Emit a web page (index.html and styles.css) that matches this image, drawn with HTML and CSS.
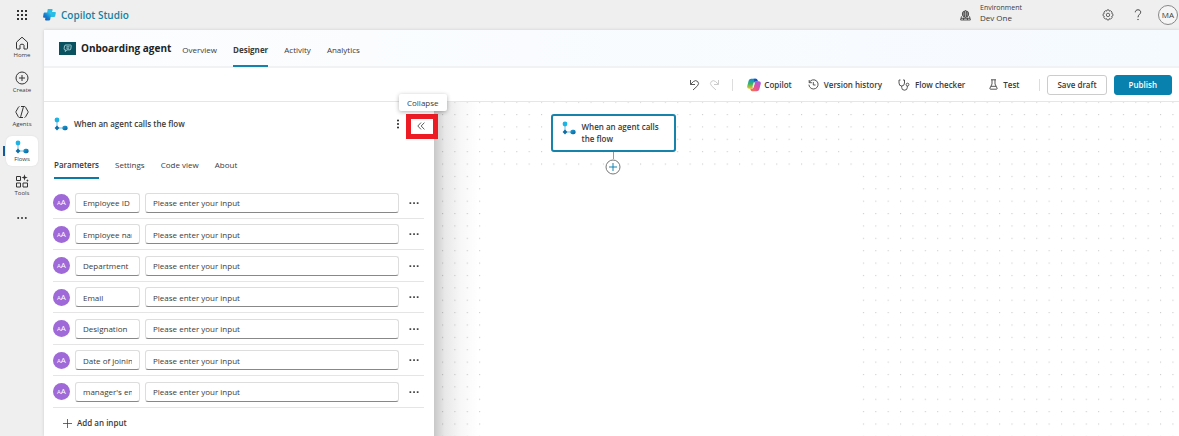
FILE: index.html
```html
<!DOCTYPE html>
<html lang="en">
<head>
<meta charset="utf-8">
<title>Onboarding agent - Copilot Studio</title>
<link rel="stylesheet" href="styles.css">
</head>
<body>
<svg class="defs" aria-hidden="true">
  <defs>
    <linearGradient id="node-blue" x1="0" y1="0" x2="1" y2="1"><stop offset="0" stop-color="#1fa4d4"/><stop offset="1" stop-color="#0a5c9c"/></linearGradient>
    <linearGradient id="logo-blue" x1="0" y1="1" x2="1" y2="0"><stop offset="0" stop-color="#1746a8"/><stop offset=".5" stop-color="#1581cf"/><stop offset="1" stop-color="#39d3ee"/></linearGradient>
    <linearGradient id="cp-left" x1="0" y1="0" x2="0" y2="1"><stop offset="0" stop-color="#1687e0"/><stop offset=".5" stop-color="#31b76a"/><stop offset="1" stop-color="#f2c21b"/></linearGradient>
    <linearGradient id="cp-right" x1="1" y1="0" x2="0" y2="1"><stop offset="0" stop-color="#9a5cf0"/><stop offset=".5" stop-color="#e0529c"/><stop offset="1" stop-color="#fb7a3c"/></linearGradient>
    <symbol id="flow" viewBox="0 0 14 14"><path d="M3 3v8h8" fill="none" stroke="#3a9cc8" stroke-width=".7"/><circle cx="3" cy="3" r="2.400" fill="#1db4e4"/><path d="M3 8.600 5.400 11 3 13.400.6 11z" fill="#0f6ea6"/><rect x="8.400" y="8.800" width="5.200" height="4.400" rx="2" fill="url(#node-blue)"/></symbol>
    <symbol id="more" viewBox="0 0 10 4"><path d="M.5 1.300h1.700V3H.5zM4.200 1.300h1.700V3H4.200zM7.800 1.300h1.700V3H7.800z" fill="#444"/></symbol>
    <pattern id="dots" width="12.380" height="12.380" patternUnits="userSpaceOnUse" patternTransform="translate(1.800 -.4)"><rect x="0" y="0" width="1.100" height="1.100" fill="#ccc"/></pattern>
  </defs>
</svg>

<header class="topbar">
  <button class="icon-btn waffle" aria-label="App launcher"><svg width="12" height="12" viewBox="0 0 12 12" fill="#333"><path d="M1 1h2v2H1zM5 1h2v2H5zM9 1h2v2H9zM1 5h2v2H1zM5 5h2v2H5zM9 5h2v2H9zM1 9h2v2H1zM5 9h2v2H5zM9 9h2v2H9z"/></svg></button>
  <a class="brand" href="#">
    <svg width="13" height="12" viewBox="0 0 13 12"><path d="M4.800 0h4q1 0 .8 1L9 3h3q1 0 .8 1l-.6 3q-.2 1-1.200 1H5L4 4z" fill="#28bde4"/><path d="M1.600 3.500h6q1 0 .8 1L7.200 10.500Q7 11.600 6 11.600H3q-1 0-.9-1l.3-1.900H1q-1 0-.9-1l.5-3.200q.2-1 1-1z" fill="url(#logo-blue)"/></svg>
    <span>Copilot Studio</span>
  </a>
  <div class="environment">
    <svg width="11" height="11" viewBox="0 0 11 11" fill="none" stroke="#333" stroke-width=".8"><circle cx="5.500" cy="4" r="3.200"/><ellipse cx="5.500" cy="4" rx="1.400" ry="3.200"/><path d="M2.300 3h6.400M2.300 5h6.400M1.500 6.300.6 10h9.800l-.9-3.700M1 8.300h9M3.800 7.500 3.500 10M7.200 7.500l.3 2.500"/></svg>
    <div class="env-text"><span class="env-label">Environment</span><span>Dev One</span></div>
  </div>
  <button class="icon-btn settings" aria-label="Settings"><svg width="12" height="12" viewBox="0 0 12 12" fill="none" stroke="#444" stroke-width=".8"><path d="m5 .9 2 0 .4 1.300 1.300-.5 1.400 1.400-.5 1.200 1.300.6v2l-1.300.6.5 1.200-1.400 1.400-1.300-.5-.4 1.300H5l-.5-1.300-1.200.5L1.900 8.700l.5-1.200-1.300-.6v-2l1.300-.6-.5-1.200 1.400-1.400 1.200.5z" stroke-linejoin="round"/><circle cx="6" cy="5.900" r="1.700"/></svg></button>
  <button class="icon-btn help" aria-label="Help"><svg width="8" height="12" viewBox="0 0 8 12" fill="none" stroke="#444" stroke-width="1"><path d="M1.300 3.300C1.300 1.700 2.400.8 4 .8s2.700.9 2.700 2.400C6.700 5.300 4 5.600 4 8.300"/><circle cx="4" cy="10.500" r=".3"/></svg></button>
  <button class="avatar" aria-label="Account">MA</button>
</header>

<div class="shell">
  <nav class="rail" aria-label="Main">
    <a href="#"><svg width="14" height="14" viewBox="0 0 14 14" fill="none" stroke="#333"><path d="M1.500 6.200 7 1.200l5.500 5v6q0 .8-.8.8H9V9.300Q9 8.200 7 8.200t-2 1.100V13H2.300q-.8 0-.8-.8z" stroke-linejoin="round"/></svg>Home</a>
    <a href="#"><svg width="14" height="14" viewBox="0 0 14 14" fill="none" stroke="#333"><circle cx="7" cy="7" r="6"/><path d="M7 4v6M4 7h6"/></svg>Create</a>
    <a href="#"><svg width="14" height="14" viewBox="0 0 14 14" fill="none" stroke="#333" stroke-linejoin="round"><path d="M9 1.500H4.600q-.8 0-1.200.8L1 6.500q-.3.500 0 1l2.300 4.200q.4.800 1.200.8.900 0 1.200-.9L8.300 2.400Q8.600 1.500 9.400 1.500q.8 0 1.200.8L13 6.500q.3.500 0 1l-2.400 4.200q-.4.800-1.200.8H5"/><path d="M4.600 1.500H6M8 12.500h1.400" stroke="#efefef" stroke-width="1.200"/></svg>Agents</a>
    <a href="#" class="current" aria-current="page"><svg width="14" height="14"><use href="#flow"/></svg>Flows</a>
    <a href="#"><svg width="14" height="14" viewBox="0 0 14 14" fill="none" stroke="#333"><path d="M1.500 2.500h4v4h-4zM1.500 9h4v4h-4zM8 9h4.500v4H8z"/><path d="M9.500.3 10.300 2.700l2.400.8-2.400.8-.8 2.400-.8-2.400-2.300-.8 2.300-.8zM12.400 5l.4 1.200 1.200.4-1.200.4-.4 1.200L12 7l-1.200-.4 1.200-.4z" fill="#333" stroke="none"/></svg>Tools</a>
    <button class="icon-btn rail-more" aria-label="More"><svg width="10" height="4" viewBox="0 0 10 4" fill="#333"><circle cx="1.200" cy="2" r="1"/><circle cx="5" cy="2" r="1"/><circle cx="8.800" cy="2" r="1"/></svg></button>
  </nav>

  <main class="main">
    <div class="agent-bar">
      <svg width="17" height="13" viewBox="0 0 17 13"><path d="M0 0h17v13H0z" fill="#09515f"/><path d="M7 3h4.500q.8 0 .7.800L11.800 7q-.1.800-1 .8H8L6.200 9.500 6.400 7.800q-1.500 0-1.300-1L5.500 4Q5.600 3 7 3zM7.500 4.800h3M7.300 6.200h2.800" fill="none" stroke="#b9e6e9" stroke-width=".8"/></svg>
      <h1>Onboarding agent</h1>
      <nav class="tabs" aria-label="Agent">
        <a href="#">Overview</a><a href="#" class="selected" aria-current="page">Designer</a><a href="#">Activity</a><a href="#">Analytics</a>
      </nav>
    </div>

    <div class="toolbar">
      <button class="icon-btn undo" aria-label="Undo"><svg width="11" height="12" viewBox="0 0 11 12" fill="none" stroke="#444" stroke-width=".9"><path d="M1.500 1v4.500H6M1.600 5.300 4.500 2.500q2.300-1.800 4.200 0 1.900 2-.2 4.300L4 11"/></svg></button>
      <button class="icon-btn redo" aria-label="Redo" disabled><svg width="11" height="12" viewBox="0 0 11 12" fill="none" stroke="#ccc"><path d="M9.500 1v4.500H5M9.400 5.300 6.500 2.500q-2.300-1.800-4.200 0-1.900 2 .2 4.300L7 11"/></svg></button>
      <span class="divider"></span>
      <button class="tool copilot"><svg width="14" height="14" viewBox="0 0 14 14"><path d="M4.200.7h4.600q1.200 0 1.600 1.300l.4 1.300H9q-1 0-1.300 1L6 9.500q-.4 1.200-1.500 1.200H2.200Q-.3 10.700.3 8L1.600 2.800Q2.200.7 4.200.7z" fill="url(#cp-left)"/><path d="M9.800 13.300H5.200q-1.200 0-1.600-1.300l-.4-1.300H5q1 0 1.300-1L8 4.500q.4-1.200 1.500-1.200h2.300q2.500 0 1.900 2.700l-1.300 5.200q-.6 2.100-2.600 2.100z" fill="url(#cp-right)"/><path d="M6.600.7h2.200q1.200 0 1.600 1.300l.4 1.300H9q-.9 0-1.200 1z" fill="#1c4fc0"/><path d="M6.400 4.500h1.300L6.800 9.500H5.300z" fill="#fff" opacity=".75"/></svg>Copilot</button>
      <button class="tool history"><svg width="11" height="11" viewBox="0 0 11 11" fill="none" stroke="#444" stroke-width=".9"><path d="M1.300 3.500A4.600 4.600 0 1 1 .9 5.700M1.200 1v2.700h2.700M5.300 3v3h2.200"/></svg>Version history</button>
      <button class="tool checker"><svg width="12" height="12" viewBox="0 0 12 12" fill="none" stroke="#444" stroke-width=".9"><path d="M2.500 1H1v3q0 3 2.700 3t2.800-3V1H5M3.700 7v1.500q0 2.700 2.800 2.700t2.800-2.700V7"/><circle cx="9.500" cy="5.600" r="1.400"/></svg>Flow checker</button>
      <button class="tool test"><svg width="9" height="11" viewBox="0 0 9 11" fill="none" stroke="#444" stroke-width=".9"><path d="M2 .8h5M3 .8V5L1 9q-.5 1.200.5 1.200h6Q8.500 10.200 8 9L6 5V.8M2 7.300h5"/></svg>Test</button>
      <span class="divider"></span>
      <button class="btn">Save draft</button>
      <button class="btn primary">Publish</button>
    </div>

    <div class="workspace">
      <svg class="grid" aria-hidden="true"><rect width="100%" height="100%" fill="url(#dots)"/><rect x="438" y="65" width="379" height="100%" fill="#fff"/></svg>

      <section class="panel" aria-label="Trigger details">
        <div class="panel-head">
          <svg width="14" height="14"><use href="#flow"/></svg>
          <h2>When an agent calls the flow</h2>
          <button class="icon-btn kebab" aria-label="More options"><svg width="4" height="10" viewBox="0 0 4 10" fill="#222"><circle cx="2" cy="1.500" r="1"/><circle cx="2" cy="5" r="1"/><circle cx="2" cy="8.500" r="1"/></svg></button>
          <div class="collapse">
            <button class="icon-btn" aria-label="Collapse"><svg width="8" height="8" viewBox="0 0 8 8" fill="none" stroke="#333" stroke-width=".8"><path d="M4 .6.800 4 4 7.400M7.400.6 4.200 4l3.200 3.400"/></svg></button>
            <span class="tooltip" role="tooltip">Collapse</span>
          </div>
        </div>
        <nav class="panel-tabs" aria-label="Details"><a href="#" class="selected">Parameters</a><a href="#">Settings</a><a href="#">Code view</a><a href="#">About</a></nav>
        <ul class="params">
          <li><span class="type"><small>A</small>A</span><input class="name" aria-label="Input name" value="Employee ID"><input class="value" aria-label="Employee ID" value="Please enter your input"><button class="icon-btn" aria-label="Options"><svg width="10" height="4"><use href="#more"/></svg></button></li>
          <li><span class="type"><small>A</small>A</span><input class="name" aria-label="Input name" value="Employee name"><input class="value" aria-label="Employee name" value="Please enter your input"><button class="icon-btn" aria-label="Options"><svg width="10" height="4"><use href="#more"/></svg></button></li>
          <li><span class="type"><small>A</small>A</span><input class="name" aria-label="Input name" value="Department"><input class="value" aria-label="Department" value="Please enter your input"><button class="icon-btn" aria-label="Options"><svg width="10" height="4"><use href="#more"/></svg></button></li>
          <li><span class="type"><small>A</small>A</span><input class="name" aria-label="Input name" value="Email"><input class="value" aria-label="Email" value="Please enter your input"><button class="icon-btn" aria-label="Options"><svg width="10" height="4"><use href="#more"/></svg></button></li>
          <li><span class="type"><small>A</small>A</span><input class="name" aria-label="Input name" value="Designation"><input class="value" aria-label="Designation" value="Please enter your input"><button class="icon-btn" aria-label="Options"><svg width="10" height="4"><use href="#more"/></svg></button></li>
          <li><span class="type"><small>A</small>A</span><input class="name" aria-label="Input name" value="Date of joining"><input class="value" aria-label="Date of joining" value="Please enter your input"><button class="icon-btn" aria-label="Options"><svg width="10" height="4"><use href="#more"/></svg></button></li>
          <li><span class="type"><small>A</small>A</span><input class="name" aria-label="Input name" value="manager's email"><input class="value" aria-label="manager's email" value="Please enter your input"><button class="icon-btn" aria-label="Options"><svg width="10" height="4"><use href="#more"/></svg></button></li>
        </ul>
        <button class="add"><svg width="9" height="9" viewBox="0 0 9 9" fill="none" stroke="#444" stroke-width=".8"><path d="M4.500 0v9M0 4.500h9"/></svg>Add an input</button>
      </section>

      <div class="flow-map">
        <button class="node"><svg width="14" height="14"><use href="#flow"/></svg><span>When an agent calls the flow</span></button>
        <span class="wire"></span>
        <button class="icon-btn" aria-label="Add an action"><svg width="16" height="16" viewBox="0 0 16 16" fill="none"><circle cx="8" cy="8" r="7" fill="#fff" stroke="#777"/><path d="M8 4v8M4 8h8" stroke="#1583ad"/></svg></button>
      </div>
    </div>
  </main>
</div>
</body>
</html>
```
FILE: styles.css
```css
* { box-sizing: border-box; }
body { margin: 0; min-height: 100vh; display: flex; flex-direction: column; overflow: hidden; background: #efefef; color: #3a3a3a; font: 8px/12px "Open Sans", "Noto Sans", sans-serif; }
button, input { font: inherit; color: inherit; }
a { color: inherit; text-decoration: none; }
h1, h2, ul { margin: 0; padding: 0; }
svg { display: block; flex: none; }
.defs { position: absolute; width: 0; height: 0; }
.icon-btn { display: flex; align-items: center; justify-content: center; padding: 0; border: 0; background: none; flex: none; }

.topbar { display: flex; align-items: center; height: 30px; padding-left: 16px; flex: none; }
.brand { display: flex; align-items: center; gap: 5px; margin-left: 15px; color: #177f9f; font-size: 10px; font-weight: 600; }
.environment { display: flex; align-items: center; gap: 9px; margin-left: auto; }
.env-text { display: flex; flex-direction: column; width: 120px; font-size: 8px; line-height: 10px; padding-bottom: 4px; }
.env-label { font-size: 7px; }
.settings { margin-left: 2px; }
.help { margin-left: 20px; }
.avatar { width: 20px; height: 20px; margin: 0 1px 0 16px; padding: 0; border: 1px solid #888; border-radius: 50%; background: #f5f5f5; font-size: 8px; }

.shell { display: flex; flex: 1; }
.rail { width: 44px; flex: none; padding: 2px 6px 0; display: flex; flex-direction: column; gap: 4px; }
.rail a { position: relative; display: flex; flex-direction: column; align-items: center; gap: 1px; height: 30px; padding-top: 4px; border-radius: 6px; font-size: 6px; line-height: 8px; }
.rail a:nth-child(odd) { height: 31px; }
.rail .current { background: #fff; box-shadow: 0 0 2px #ddd; }
.rail .current::before { content: ""; position: absolute; left: -3px; top: 10px; width: 2px; height: 10px; background: #135a9c; }
.rail-more { height: 12px; margin-top: 7px; }

.main { flex: 1; min-width: 0; display: flex; flex-direction: column; background: #fff; box-shadow: 0 0 3px #ccc; }
.agent-bar { display: flex; align-items: center; height: 38px; padding-left: 15px; border-bottom: 2px solid #f1f2f3; background: linear-gradient(90deg, #fcfdff, #f5fafe); }
h1 { margin-left: 5px; font-size: 10px; font-weight: 700; color: #222; }
.tabs { display: flex; align-self: stretch; gap: 16px; margin-left: 11px; }
.tabs a { display: flex; align-items: center; padding-top: 5px; border-bottom: 2px solid transparent; }
.tabs .selected { margin-bottom: -1px; border-color: #1383ad; font-weight: 700; }

.toolbar { display: flex; align-items: center; height: 34px; padding-right: 7px; border-bottom: 1px solid #e6e6e6; }
.undo { margin-left: auto; }
.redo { margin-left: 9px; }
.divider { width: 1px; height: 12px; background: #ddd; }
.redo + .divider { margin: 0 14px 0 12px; }
.tool { display: flex; align-items: center; gap: 5px; padding: 0; border: 0; background: none; font-weight: 600; }
.copilot { gap: 3px; }
.history, .checker { margin-left: 16px; }
.test { margin: 0 20px 0 24px; }
.btn { height: 20px; margin-left: 7px; padding: 0 9px; border: 1px solid #ccc; border-radius: 3px; background: #fff; font-weight: 600; }
.primary { padding: 0 14px; background: #0881ae; border-color: #0881ae; color: #fff; }

.workspace { position: relative; display: flex; flex: 1; }
.grid { position: absolute; inset: 0; width: 100%; height: 100%; }
.panel { position: relative; z-index: 1; width: 390px; flex: none; padding: 0 10px 0 9px; background: #fff; }
.panel::after { content: ""; position: absolute; left: 100%; top: 0; bottom: 0; width: 44px; background: linear-gradient(90deg, rgb(0 0 0 / 22%), rgb(0 0 0 / 9%) 25%, rgb(0 0 0 / 3%) 60%, transparent); pointer-events: none; }
.panel-head { display: flex; align-items: center; height: 44px; padding-left: 1px; }
h2 { margin-left: 6px; font-size: 8px; font-weight: 600; }
.kebab { margin-left: auto; }
.collapse { position: relative; z-index: 1; margin: 4px -14px 0 6px; border: 5px solid #ed1c24; background: #fff; }
.collapse .icon-btn { width: 19px; height: 15px; margin-right: 3px; }
.tooltip { position: absolute; left: -12px; top: -25px; padding: 3px 8px 2px; border-radius: 2px; background: #fff; box-shadow: 0 1px 4px rgb(0 0 0 / 30%); }
.panel-tabs { display: flex; gap: 16px; height: 33px; padding-left: 1px; }
.panel-tabs a { padding-top: 13px; border-bottom: 2px solid transparent; }
.panel-tabs .selected { border-color: #0b7aa4; font-weight: 600; }
.params { list-style: none; padding-top: 8px; }
.params li { display: flex; align-items: center; height: 31px; border-bottom: 1px solid #e5e5e5; }
.params li:nth-child(odd) { height: 32px; }
.type { display: flex; align-items: baseline; justify-content: center; width: 17px; height: 17px; margin-right: 5px; border-radius: 50%; background: #9f69d8; color: #fff; font-size: 8px; line-height: 16px; }
.type small { font-size: 6px; }
.params input { min-width: 0; height: 20px; padding: 0 7px; border: 1px solid #ddd; border-bottom-color: #888; border-radius: 3px; background: #fff; outline: 0; }
.params .name { width: 65px; margin-right: 5px; }
.params .value { flex: 1; margin-right: 10px; }
.params .icon-btn { margin-right: 5px; }
.add { display: flex; align-items: center; gap: 5px; margin: 9px 0 0 10px; padding: 0; border: 0; background: none; font-weight: 600; }

.flow-map { flex: 1; position: relative; display: flex; flex-direction: column; align-items: center; padding: 12px 387px 0 0; }
.node { display: flex; gap: 6px; width: 125px; flex: none; padding: 5px 9px; border: 2px solid #1783ac; border-radius: 3px; background: #fff; text-align: left; font-weight: 600; line-height: 12px; }
.wire { width: 1px; height: 7px; background: #999; }
```
